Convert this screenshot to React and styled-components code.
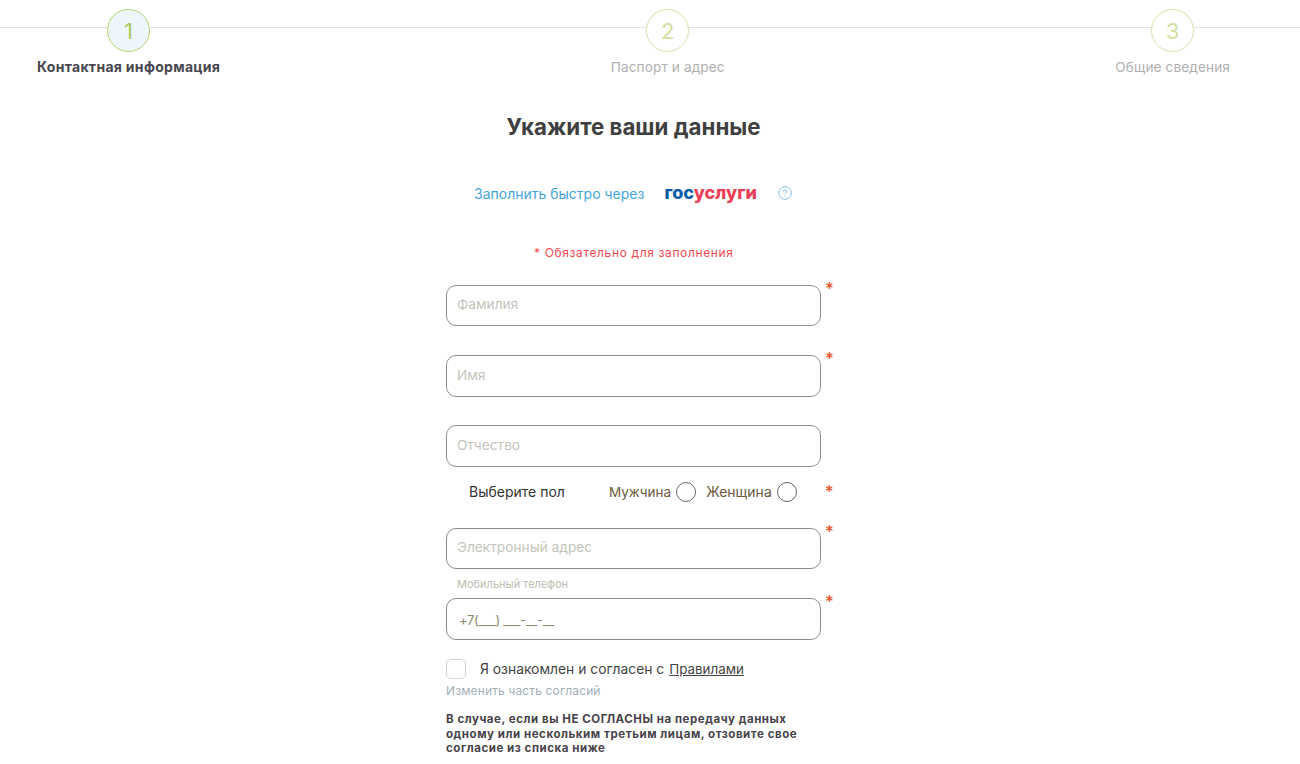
import React from "react";
import styled, { createGlobalStyle } from "styled-components";

const Global = createGlobalStyle`
  html, body { margin: 0; padding: 0; background: #fff; }
  body { font-family: Inter, Roboto, "Liberation Sans", sans-serif; color: #444; overflow: hidden; height: 764px; }
`;

const Steps = styled.div`
  display: flex;
  justify-content: space-between;
  padding: 9px 70px 0 37px;
  background: linear-gradient(#e2e2e2, #e2e2e2) 0 27px / 100% 1px no-repeat;
`;
const Step = styled.div`
  display: flex;
  flex-direction: column;
  align-items: center;
  gap: 6px;
`;
const Circle = styled.div`
  width: 41px;
  height: 41px;
  border-radius: 50%;
  border: 1px solid ${(p) => (p.$active ? "#b5d56a" : "#d5e3a8")};
  background: ${(p) => (p.$active ? "#eef5fc" : "#fff")};
  color: ${(p) => (p.$active ? "#aacb5d" : "#d3dfa2")};
  font-size: 22px;
  display: flex;
  align-items: center;
  justify-content: center;
`;
const StepLabel = styled.div`
  font-size: ${(p) => (p.$active ? 14 : 13.6)}px;
  line-height: 18px;
  letter-spacing: ${(p) => (p.$active ? 0.3 : 0.12)}px;
  font-weight: ${(p) => (p.$active ? 700 : 400)};
  color: ${(p) => (p.$active ? "#47474f" : "#b0b0b0")};
`;
const Title = styled.h1`
  margin: 0;
  padding: 36px 33px 0 0;
  text-align: center;
  font-size: 22.3px;
  line-height: 30px;
  font-weight: 700;
  color: #3f3f3f;
`;
const Gos = styled.div`
  display: flex;
  align-items: center;
  margin: 37px 0 0 474px;
  height: 28px;
`;
const GosLink = styled.span`
  font-size: 14px;
  color: #45a5d8;
`;
const GosLogo = styled.span`
  margin-left: 20px;
  margin-top: -2px;
  font-size: 18px;
  font-weight: 800;
  color: #0b5ca8;
`;
const GosRed = styled.span`
  color: #ee3f58;
`;
const Help = styled.span`
  margin-left: 21px;
  display: flex;
`;
const Required = styled.div`
  margin: 38px 0 0 534px;
  font-size: 12px;
  line-height: 16px;
  letter-spacing: 0.63px;
  color: #f4484f;
`;
const Form = styled.div`
  width: 400px;
  margin: 24px 0 0 446px;
  display: flex;
  flex-direction: column;
`;
const Row = styled.div`
  display: flex;
  align-items: flex-start;
  margin-top: ${(p) => p.$mt || 0}px;
  margin-bottom: ${(p) => p.$mb || 0}px;
`;
const Field = styled.div`
  width: 375px;
  height: ${(p) => p.$h || 41}px;
  box-sizing: border-box;
  border: 1px solid #8e8e8e;
  border-radius: 10px;
  display: flex;
  align-items: center;
  padding: 0 0 3px 10px;
  font-size: 13.7px;
  color: #c4c4bc;
`;
const Star = styled.span`
  margin-left: ${(p) => p.$ml ?? 4}px;
  color: #e8562a;
  font-size: 17px;
  line-height: 16px;
  font-weight: 500;
  margin-top: ${(p) => p.$top ?? -4}px;
`;
const Gender = styled.div`
  display: flex;
  align-items: center;
  height: 25px;
  margin-top: 12px;
  padding-left: 23px;
  font-size: 14px;
  color: #333;
`;
const GenderTitle = styled.span`
  width: 140px;
`;
const Choice = styled.span`
  color: #6b5a3e;
  font-size: ${(p) => p.$size || 14}px;
`;
const Radio = styled.span`
  width: 18px;
  height: 18px;
  border: 1px solid #666;
  border-radius: 50%;
  margin-left: 5px;
  margin-right: ${(p) => p.$mr || 0}px;
`;
const Small = styled.div`
  margin: 8px 0 7px 11px;
  font-size: 11px;
  line-height: 14px;
  color: #bdbdb2;
`;
const Phone = styled.span`
  color: #8a8a72;
  font-size: 13px;
  letter-spacing: -0.3px;
  padding: 4px 0 0 2px;
`;
const Agree = styled.div`
  display: flex;
  align-items: center;
  margin-top: 19px;
  font-size: 13.85px;
  color: #444;
`;
const Box = styled.span`
  width: 18px;
  height: 18px;
  border: 1px solid #cdd3d8;
  border-radius: 5px;
  margin-right: 14px;
`;
const Rules = styled.a`
  margin-left: 5px;
  font-size: 13.4px;
  color: #444;
  text-decoration: underline;
`;
const Change = styled.div`
  margin-top: 4px;
  font-size: 12px;
  line-height: 16px;
  letter-spacing: 0.13px;
  color: #9fb0b8;
`;
const Note = styled.div`
  margin-top: 13px;
  width: 370px;
  font-size: 11.5px;
  line-height: 14.5px;
  font-weight: 700;
  letter-spacing: 0.55px;
  color: #47424a;
`;

const steps = [
  { n: 1, label: "Контактная информация", active: true },
  { n: 2, label: "Паспорт и адрес" },
  { n: 3, label: "Общие сведения" },
];

export default function App() {
  return (
    <>
      <Global />
      <Steps>
        {steps.map((s) => (
          <Step key={s.n}>
            <Circle $active={s.active}>{s.n}</Circle>
            <StepLabel $active={s.active}>{s.label}</StepLabel>
          </Step>
        ))}
      </Steps>
      <Title>Укажите ваши данные</Title>
      <Gos>
        <GosLink>Заполнить быстро через</GosLink>
        <GosLogo>
          гос<GosRed>услуги</GosRed>
        </GosLogo>
        <Help>
          <svg width="14" height="14" viewBox="0 0 14 14" fill="none">
            <circle cx="7" cy="7" r="6.3" stroke="#7fc0e4" strokeWidth="1" />
            <path d="M5.2 5.5a1.8 1.8 0 1 1 2.6 1.6c-.6.3-.8.6-.8 1.2" stroke="#7fc0e4" strokeWidth="1" />
            <circle cx="7" cy="10.1" r=".6" fill="#7fc0e4" />
          </svg>
        </Help>
      </Gos>
      <Required>* Обязательно для заполнения</Required>
      <Form>
        <Row $mb={29}>
          <Field>Фамилия</Field>
          <Star>*</Star>
        </Row>
        <Row $mb={28}>
          <Field $h={42}>Имя</Field>
          <Star>*</Star>
        </Row>
        <Row>
          <Field $h={42}>Отчество</Field>
        </Row>
        <Gender>
          <GenderTitle>Выберите пол</GenderTitle>
          <Choice $size={13.5}>Мужчина</Choice>
          <Radio $mr={10} />
          <Choice>Женщина</Choice>
          <Radio />
          <Star $top={1} $ml={28}>*</Star>
        </Gender>
        <Row $mt={24}>
          <Field>Электронный адрес</Field>
          <Star>*</Star>
        </Row>
        <Small>Мобильный телефон</Small>
        <Row>
          <Field $h={42}>
            <Phone>+7(___) ___-__-__</Phone>
          </Field>
          <Star>*</Star>
        </Row>
        <Agree>
          <Box />
          Я ознакомлен и согласен с <Rules>Правилами</Rules>
        </Agree>
        <Change>Изменить часть согласий</Change>
        <Note>
          В случае, если вы НЕ СОГЛАСНЫ на передачу данных одному или нескольким третьим лицам, отзовите свое
          согласие из списка ниже
        </Note>
      </Form>
    </>
  );
}
